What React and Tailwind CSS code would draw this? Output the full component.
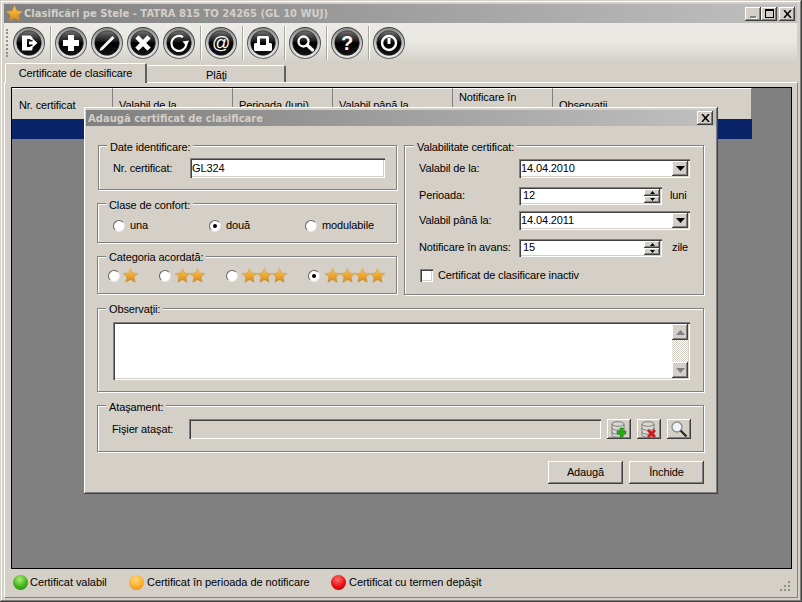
import React from "react";

const raised = "shadow-[inset_-1px_-1px_0_#404040,inset_1px_1px_0_#ffffff,inset_-2px_-2px_0_#808080,inset_2px_2px_0_#d4d0c8]";
const sunken = "shadow-[inset_1px_1px_0_#808080,inset_2px_2px_0_#404040,inset_-1px_-1px_0_#ffffff,inset_-2px_-2px_0_#d4d0c8]";
const etched = "shadow-[inset_1px_1px_0_#ffffff,1px_1px_0_#ffffff]";

function Star({ size = 15 }) {
  return (
    <svg width={size} height={size} viewBox="1 1.500 22 21.500" className="shrink-0">
      <defs>
        <linearGradient id="starg" x1="0" y1="0" x2="0" y2="1">
          <stop offset="0" stopColor="#f8c860" />
          <stop offset="0.55" stopColor="#eda52e" />
          <stop offset="1" stopColor="#c98a20" />
        </linearGradient>
      </defs>
      <path d="M12 1.500l3.200 7.100 7.800.8-5.800 5.200 1.700 7.700L12 18.300l-6.900 4 1.700-7.700L1 9.400l7.800-.8z" fill="url(#starg)" stroke="#b9842a" strokeWidth="0.5" />
    </svg>
  );
}

function Glyph({ name }) {
  switch (name) {
    case "exit":
      return <path d="M9 8.500h8.500l2 2v2.500h-2v-1h-3.500v8h3.500v-1h2v3.500l-1 1H9z M16 14.500h3.500v-3l5 4.500-5 4.500v-3H16z" fill="#fff" />;
    case "plus":
      return <path d="M13 8h6v5h5v6h-5v5h-6v-5H8v-6h5z" fill="#fff" />;
    case "edit":
      return <path d="M21.500 9l2 2L11.500 23l-3 1 1-3z" fill="#fff" />;
    case "x":
      return <path d="M11.500 8.300L16 12.800l4.500-4.500 3.200 3.200-4.500 4.500 4.500 4.500-3.200 3.200-4.500-4.500-4.500 4.500-3.200-3.200 4.500-4.500-4.500-4.500z" fill="#fff" />;
    case "refresh":
      return (
        <g>
          <path d="M20 10.200A7.500 7.500 0 1 0 23.300 17.500" fill="none" stroke="#fff" strokeWidth="2.200" />
          <path d="M19.500 14.500l6.500-1-2.300 6z" fill="#fff" />
        </g>
      );
    case "at":
      return <text x="16" y="21.500" textAnchor="middle" fontFamily="'Liberation Sans',sans-serif" fontSize="18" fill="#fff">@</text>;
    case "print":
      return <path d="M11 9h10l1 1v6h2l1 1v6l-1 1H8l-1-1v-6l1-1h2v-6zm2 2.500v6.500h6v-6.500z" fill="#fff" fillRule="evenodd" />;
    case "search":
      return (
        <g>
          <circle cx="14.500" cy="14.500" r="5" fill="none" stroke="#fff" strokeWidth="2.300" />
          <path d="M18 18l5.500 5" stroke="#fff" strokeWidth="3.200" strokeLinecap="round" />
        </g>
      );
    case "help":
      return <text x="16" y="23" textAnchor="middle" fontFamily="'Liberation Sans',sans-serif" fontWeight="700" fontSize="20" fill="#fff">?</text>;
    default:
      return (
        <g>
          <circle cx="16" cy="16" r="7" fill="none" stroke="#fff" strokeWidth="2.500" />
          <path d="M16 11v6" stroke="#fff" strokeWidth="3" />
        </g>
      );
  }
}

function ToolIcon({ name }) {
  return (
    <svg width="32" height="32" viewBox="0 0 32 32" className="shrink-0">
      <defs>
        <linearGradient id="ringg" x1="0" y1="0" x2="0" y2="1">
          <stop offset="0" stopColor="#3c3c3c" />
          <stop offset="1" stopColor="#6a6a6a" />
        </linearGradient>
        <linearGradient id="midg" x1="0" y1="0" x2="0" y2="1">
          <stop offset="0" stopColor="#8c8c8c" />
          <stop offset="0.5" stopColor="#c4c4c4" />
          <stop offset="1" stopColor="#ececec" />
        </linearGradient>
        <linearGradient id="ballg" x1="0" y1="0" x2="0" y2="1">
          <stop offset="0" stopColor="#707070" />
          <stop offset="0.42" stopColor="#1c1c1c" />
          <stop offset="0.5" stopColor="#000000" />
          <stop offset="1" stopColor="#141414" />
        </linearGradient>
      </defs>
      <circle cx="16" cy="16" r="16" fill="url(#ringg)" />
      <circle cx="16" cy="16" r="15" fill="url(#midg)" />
      <circle cx="16" cy="16" r="12.300" fill="url(#ballg)" stroke="#222" strokeWidth="0.6" />
      <Glyph name={name} />
    </svg>
  );
}

function Sep({ className = "ml-[5px]" }) {
  return <div className={`w-px h-[34px] ${className} mr-[4px] bg-[#a8a6a0] shadow-[1px_0_0_#ffffff]`} />;
}

function Group({ title, className, legendClass = "left-[8px] -top-[6px]", children }) {
  return (
    <div className={`relative border border-[#808080] ${etched} ${className}`}>
      <span className={`absolute ${legendClass} bg-[#d4d0c8] px-[3px] leading-[14px] whitespace-nowrap`}>{title}</span>
      {children}
    </div>
  );
}

function Radio({ checked }) {
  return (
    <span className="relative block w-[12px] h-[12px] shrink-0 rounded-full bg-white border border-t-[#606060] border-l-[#606060] border-r-[#e8e6e0] border-b-[#e8e6e0]">
      {checked && <span className="absolute left-[3px] top-[3px] w-[4px] h-[4px] rounded-full bg-black" />}
    </span>
  );
}

function Caret() {
  return (
    <svg width="9" height="5" viewBox="0 0 9 5"><path d="M0 0h9L4.500 5z" fill="#000" /></svg>
  );
}

function DateField({ value }) {
  return (
    <div className={`w-[171px] h-[19px] bg-white ${sunken} flex items-center justify-between pl-[2px] pr-[2px]`}>
      <span>{value}</span>
      <span className={`w-[16px] h-[15px] bg-[#d4d0c8] ${raised} flex items-center justify-center`}><Caret /></span>
    </div>
  );
}

function SpinField({ value }) {
  return (
    <div className={`w-[143px] h-[18px] bg-white ${sunken} flex items-center justify-between pl-[4px] pr-[2px]`}>
      <span>{value}</span>
      <span className="w-[16px] h-[14px] flex flex-col">
        <span className={`h-[7px] bg-[#d4d0c8] ${raised} flex items-center justify-center`}>
          <svg width="5" height="3" viewBox="0 0 5 3"><path d="M2.500 0L5 3H0z" fill="#000" /></svg>
        </span>
        <span className={`h-[7px] bg-[#d4d0c8] ${raised} flex items-center justify-center`}>
          <svg width="5" height="3" viewBox="0 0 5 3"><path d="M0 0h5L2.500 3z" fill="#000" /></svg>
        </span>
      </span>
    </div>
  );
}

function Row({ label, className, children, suffix, suffixClass }) {
  return (
    <div className={`flex items-center h-[19px] ${className}`}>
      <span className="w-[100px] shrink-0 whitespace-nowrap">{label}</span>
      {children}
      {suffix && <span className={suffixClass}>{suffix}</span>}
    </div>
  );
}

function Db() {
  return (
    <g>
      <path d="M2 4c0-3 12-3 12 0v11c0 3-12 3-12 0z" fill="#d8d8d4" stroke="#6c6c68" strokeWidth="0.8" />
      <path d="M2 4c0 3 12 3 12 0M2 8c0 3 12 3 12 0M2 12c0 3 12 3 12 0" fill="none" stroke="#6c6c68" strokeWidth="0.8" />
    </g>
  );
}

function AttachBtn({ children, className }) {
  return (
    <span className={`w-[24px] h-[20px] bg-[#d4d0c8] ${raised} flex items-center justify-center ${className}`}>
      <svg width="18" height="18" viewBox="0 0 18 18">{children}</svg>
    </span>
  );
}

function Dot({ className }) {
  return <span className={`w-[15px] h-[15px] rounded-full shrink-0 ${className}`} />;
}

const tools1 = ["plus", "edit", "x", "refresh"];
const cols = [
  { w: "w-[101px]", t: "Nr. certificat", pl: "pl-[7px]", extra: "pt-[3px]" },
  { w: "w-[120px]", t: "Valabil de la", pl: "pl-[6px]", extra: "pt-[3px]" },
  { w: "w-[100px]", t: "Perioada (luni)", pl: "pl-[6px]", extra: "pt-[3px]" },
  { w: "w-[120px]", t: "Valabil până la", pl: "pl-[6px]", extra: "pt-[3px]" },
  { w: "w-[100px]", t: "Notificare în avans", pl: "pl-[6px]", extra: "w-[76px]" },
  { w: "w-[199px]", t: "Observaţii", pl: "pl-[6px]", extra: "pt-[3px]" },
];

export default function App() {
  return (
    <div className="relative w-[802px] h-[602px] overflow-hidden bg-[#d4d0c8] text-[11px] leading-[13px] tracking-[-0.12px] text-black font-['Liberation_Sans',Arial,sans-serif] flex flex-col pt-[4px] px-[4px] pb-[4px] shadow-[inset_-1px_-1px_0_#404040,inset_1px_1px_0_#d4d0c8,inset_-2px_-2px_0_#808080,inset_2px_2px_0_#ffffff]">
      {/* title bar */}
      <div className="h-[19px] w-[793px] shrink-0 flex items-center bg-gradient-to-r from-[#808080] to-[#c0c0c0] pl-[2px] pr-[2px]">
        <Star size={17} />
        <span className="ml-px font-['DejaVu_Sans',sans-serif] font-bold text-[10px] tracking-normal text-[#d4d0c8] whitespace-nowrap">Clasificări pe Stele - TATRA 815 TO 24265 (GL 10 WUJ)</span>
        <span className="ml-auto flex">
          <span className={`w-[16px] h-[14px] bg-[#d4d0c8] ${raised} flex items-end justify-center pb-[3px]`}><span className="w-[6px] h-[2px] bg-[#808080] shadow-[1px_1px_0_#ffffff]" /></span>
          <span className={`w-[16px] h-[14px] bg-[#d4d0c8] ${raised} flex items-center justify-center`}><span className="w-[9px] h-[9px] border border-black border-t-2" /></span>
          <span className={`ml-[2px] w-[16px] h-[14px] bg-[#d4d0c8] ${raised} flex items-center justify-center`}>
            <svg width="9" height="8" viewBox="0 0 9 8"><path d="M1 0l7 8M8 0l-7 8" stroke="#000" strokeWidth="1.500" /></svg>
          </span>
        </span>
      </div>

      {/* toolbar */}
      <div className="h-[39px] w-[793px] shrink-0 flex items-center pl-[2px] bg-gradient-to-b from-[#ebeae5] via-[#e8e7e2] to-[#d4d0c8]">
        <span className="w-[2px] h-[28px] mr-[5px] border-l-2 border-dotted border-[#8c8c88]" />
        <ToolIcon name="exit" />
        <Sep />
        <div className="flex gap-[4px]">
          {tools1.map((n) => <ToolIcon key={n} name={n} />)}
        </div>
        <Sep />
        <ToolIcon name="at" />
        <Sep />
        <ToolIcon name="print" />
        <Sep />
        <ToolIcon name="search" />
        <Sep />
        <ToolIcon name="help" />
        <Sep />
        <ToolIcon name="power" />
      </div>

      {/* tabs */}
      <div className="h-[21px] w-[793px] shrink-0 flex items-end pl-px relative z-10 -mb-px">
        <div className="w-[142px] h-[20px] pt-[3px] text-center bg-[#d4d0c8] border-t border-l border-white border-r-2 border-r-[#606060] rounded-t-[2px]">Certificate de clasificare</div>
        <div className="w-[139px] h-[17px] mb-px pt-[3px] pl-[2px] text-center bg-[#d4d0c8] border-t border-white border-r-2 border-r-[#606060] rounded-t-[2px]">Plăţi</div>
      </div>

      {/* page */}
      <div className="flex-1 w-[794px] flex flex-col pt-[4px] pl-[6px] pr-[5px] border-t border-t-white border-l border-l-white border-r border-r-[#808080] border-b border-b-[#808080]">
        <div className="h-[482px] shrink-0 border border-black bg-[#808080]">
          <div className="w-[740px] h-[31px] flex bg-[#d4d0c8]">
            {cols.map((c) => (
              <div key={c.t} className={`${c.w} h-full flex items-center ${c.pl} border-t border-t-white border-r border-r-[#808080] overflow-hidden`}>
                <span className={`block ${c.extra}`}>{c.t}</span>
              </div>
            ))}
          </div>
          <div className="w-[740px] h-[20px] bg-[#0a246a]" />
        </div>
        {/* status bar */}
        <div className="flex-1 relative flex items-center pl-[2px] pb-[2px] tracking-[-0.05px]">
          <Dot className="bg-[radial-gradient(circle_at_45%_30%,#a8f070,#3fb01a_55%,#1d7a08)]" />
          <span className="ml-[2px] w-[84px]">Certificat valabil</span>
          <Dot className="ml-[15px] bg-[radial-gradient(circle_at_45%_30%,#ffd880,#fda922_60%,#e07c08)]" />
          <span className="ml-[3px] w-[173px] whitespace-nowrap">Certificat în perioada de notificare</span>
          <Dot className="ml-[11px] bg-[radial-gradient(circle_at_45%_30%,#ff7070,#e80d0d_55%,#a80000)]" />
          <span className="ml-[3px] whitespace-nowrap">Certificat cu termen depăşit</span>
          <svg width="12" height="12" viewBox="0 0 12 12" className="absolute right-[1px] bottom-[5px]">
            <path d="M9 1h2v2H9zM5 5h2v2H5zM9 5h2v2H9zM1 9h2v2H1zM5 9h2v2H5zM9 9h2v2H9z" fill="#909088" />
          </svg>
        </div>
      </div>

      {/* dialog */}
      <div className={`absolute left-[84px] top-[107px] w-[634px] h-[387px] bg-[#d4d0c8] flex flex-col ${raised}`}>
        <div className="mt-[3px] mx-[2px] h-[16px] shrink-0 flex items-center justify-between bg-gradient-to-r from-[#808080] to-[#c0c0c0] pl-[2px] pr-[3px]">
          <span className="font-['DejaVu_Sans',sans-serif] font-bold text-[10px] tracking-normal text-[#d4d0c8] whitespace-nowrap">Adaugă certificat de clasificare</span>
          <span className={`w-[16px] h-[14px] bg-[#d4d0c8] ${raised} flex items-center justify-center`}>
            <svg width="9" height="8" viewBox="0 0 9 8"><path d="M1 0l7 8M8 0l-7 8" stroke="#000" strokeWidth="1.500" /></svg>
          </span>
        </div>
        <div className="flex flex-col pt-[19px] pl-[13px] w-[620px]">
          <div className="flex gap-[7px] h-[150px]">
            <div className="w-[300px] flex flex-col gap-[13px]">
              <Group title="Date identificare:" className="h-[45px] ml-px" legendClass="left-[8px] -top-[6px]">
                <div className="flex items-center pt-[12px] pl-[14px]">
                  <span className="w-[77px] shrink-0">Nr. certificat:</span>
                  <div className={`w-[195px] h-[20px] bg-white ${sunken} flex items-center pl-[2px]`}>GL324</div>
                </div>
              </Group>
              <Group title="Clase de confort:" className="h-[40px]">
                <div className="flex items-center pt-[15px] pl-[15px]">
                  <div className="w-[96px] flex items-center gap-[5px]"><Radio /><span>una</span></div>
                  <div className="w-[96px] flex items-center gap-[5px]"><Radio checked /><span>două</span></div>
                  <div className="flex items-center gap-[5px]"><Radio /><span>modulabile</span></div>
                </div>
              </Group>
              <Group title="Categoria acordată:" className="h-[38px]" legendClass="left-[8px] -top-[7px]">
                <div className="flex items-center pt-[11px] pl-[10px]">
                  <Radio />
                  <span className="ml-[3px] flex"><Star /></span>
                  <span className="ml-[21px]"><Radio /></span>
                  <span className="ml-[4px] flex"><Star /><Star /></span>
                  <span className="ml-[21px]"><Radio /></span>
                  <span className="ml-[4px] flex"><Star /><Star /><Star /></span>
                  <span className="ml-[21px]"><Radio checked /></span>
                  <span className="ml-[5px] flex"><Star /><Star /><Star /><Star /></span>
                </div>
              </Group>
            </div>
            <Group title="Valabilitate certificat:" className="w-[300px] h-[150px] pl-[14px] pt-[13px]" legendClass="left-[9px] -top-[6px]">
              <Row label="Valabil de la:"><DateField value="14.04.2010" /></Row>
              <Row label="Perioada:" className="mt-[8px]" suffix="luni" suffixClass="ml-[8px]"><SpinField value="12" /></Row>
              <Row label="Valabil până la:" className="mt-[6px]"><DateField value="14.04.2011" /></Row>
              <Row label="Notificare în avans:" className="mt-[8px]" suffix="zile" suffixClass="ml-[10px]"><SpinField value="15" /></Row>
              <div className="flex items-center mt-[12px] ml-px">
                <span className={`w-[13px] h-[13px] bg-white ${sunken}`} />
                <span className="ml-[5px]">Certificat de clasificare inactiv</span>
              </div>
            </Group>
          </div>

          <Group title="Observaţii:" className="mt-[13px] w-[607px] h-[84px] pl-[15px] pt-[13px]" legendClass="left-[8px] -top-[7px]">
            <div className={`w-[577px] h-[58px] bg-white ${sunken} flex justify-end p-[2px]`}>
              <div className="w-[16px] flex flex-col justify-between bg-[repeating-conic-gradient(#ffffff_0_25%,#d4d0c8_0_50%)] [background-size:2px_2px]">
                <span className={`h-[16px] bg-[#d4d0c8] ${raised} flex items-center justify-center`}>
                  <svg width="9" height="5" viewBox="0 0 9 5"><path d="M4.500 0L9 5H0z" fill="#808080" /></svg>
                </span>
                <span className={`h-[16px] bg-[#d4d0c8] ${raised} flex items-center justify-center`}>
                  <svg width="9" height="5" viewBox="0 0 9 5"><path d="M0 0h9L4.500 5z" fill="#808080" /></svg>
                </span>
              </div>
            </div>
          </Group>

          <Group title="Ataşament:" className="mt-[13px] w-[607px] h-[47px]">
            <div className="flex items-center pt-[13px] pl-[14px]">
              <span className="w-[77px] shrink-0">Fişier ataşat:</span>
              <div className={`w-[412px] h-[20px] ${sunken}`} />
              <AttachBtn className="ml-[6px]">
                <Db />
                <path d="M10 8h3v3h3v3h-3v3h-3v-3H7v-3h3z" fill="#22b014" stroke="#0d7a08" strokeWidth="0.5" />
              </AttachBtn>
              <AttachBtn className="ml-[6px]">
                <Db />
                <path d="M9 9l2.500 2.500L14 9l2 2-2.500 2.500L16 16l-2 2-2.500-2.500L9 18l-2-2 2.500-2.500L7 11z" fill="#d81818" />
              </AttachBtn>
              <AttachBtn className="ml-[6px]">
                <circle cx="7" cy="7" r="5" fill="#f0f4f8" stroke="#8c8c88" strokeWidth="1.300" />
                <path d="M10.500 10.500l6 6" stroke="#2a2a2a" strokeWidth="2.300" />
              </AttachBtn>
            </div>
          </Group>

          <div className="mt-[9px] w-[607px] flex justify-end gap-[6px]">
            <button className={`w-[75px] h-[23px] bg-[#d4d0c8] ${raised}`}>Adaugă</button>
            <button className={`w-[75px] h-[23px] bg-[#d4d0c8] ${raised}`}>Închide</button>
          </div>
        </div>
      </div>
    </div>
  );
}
